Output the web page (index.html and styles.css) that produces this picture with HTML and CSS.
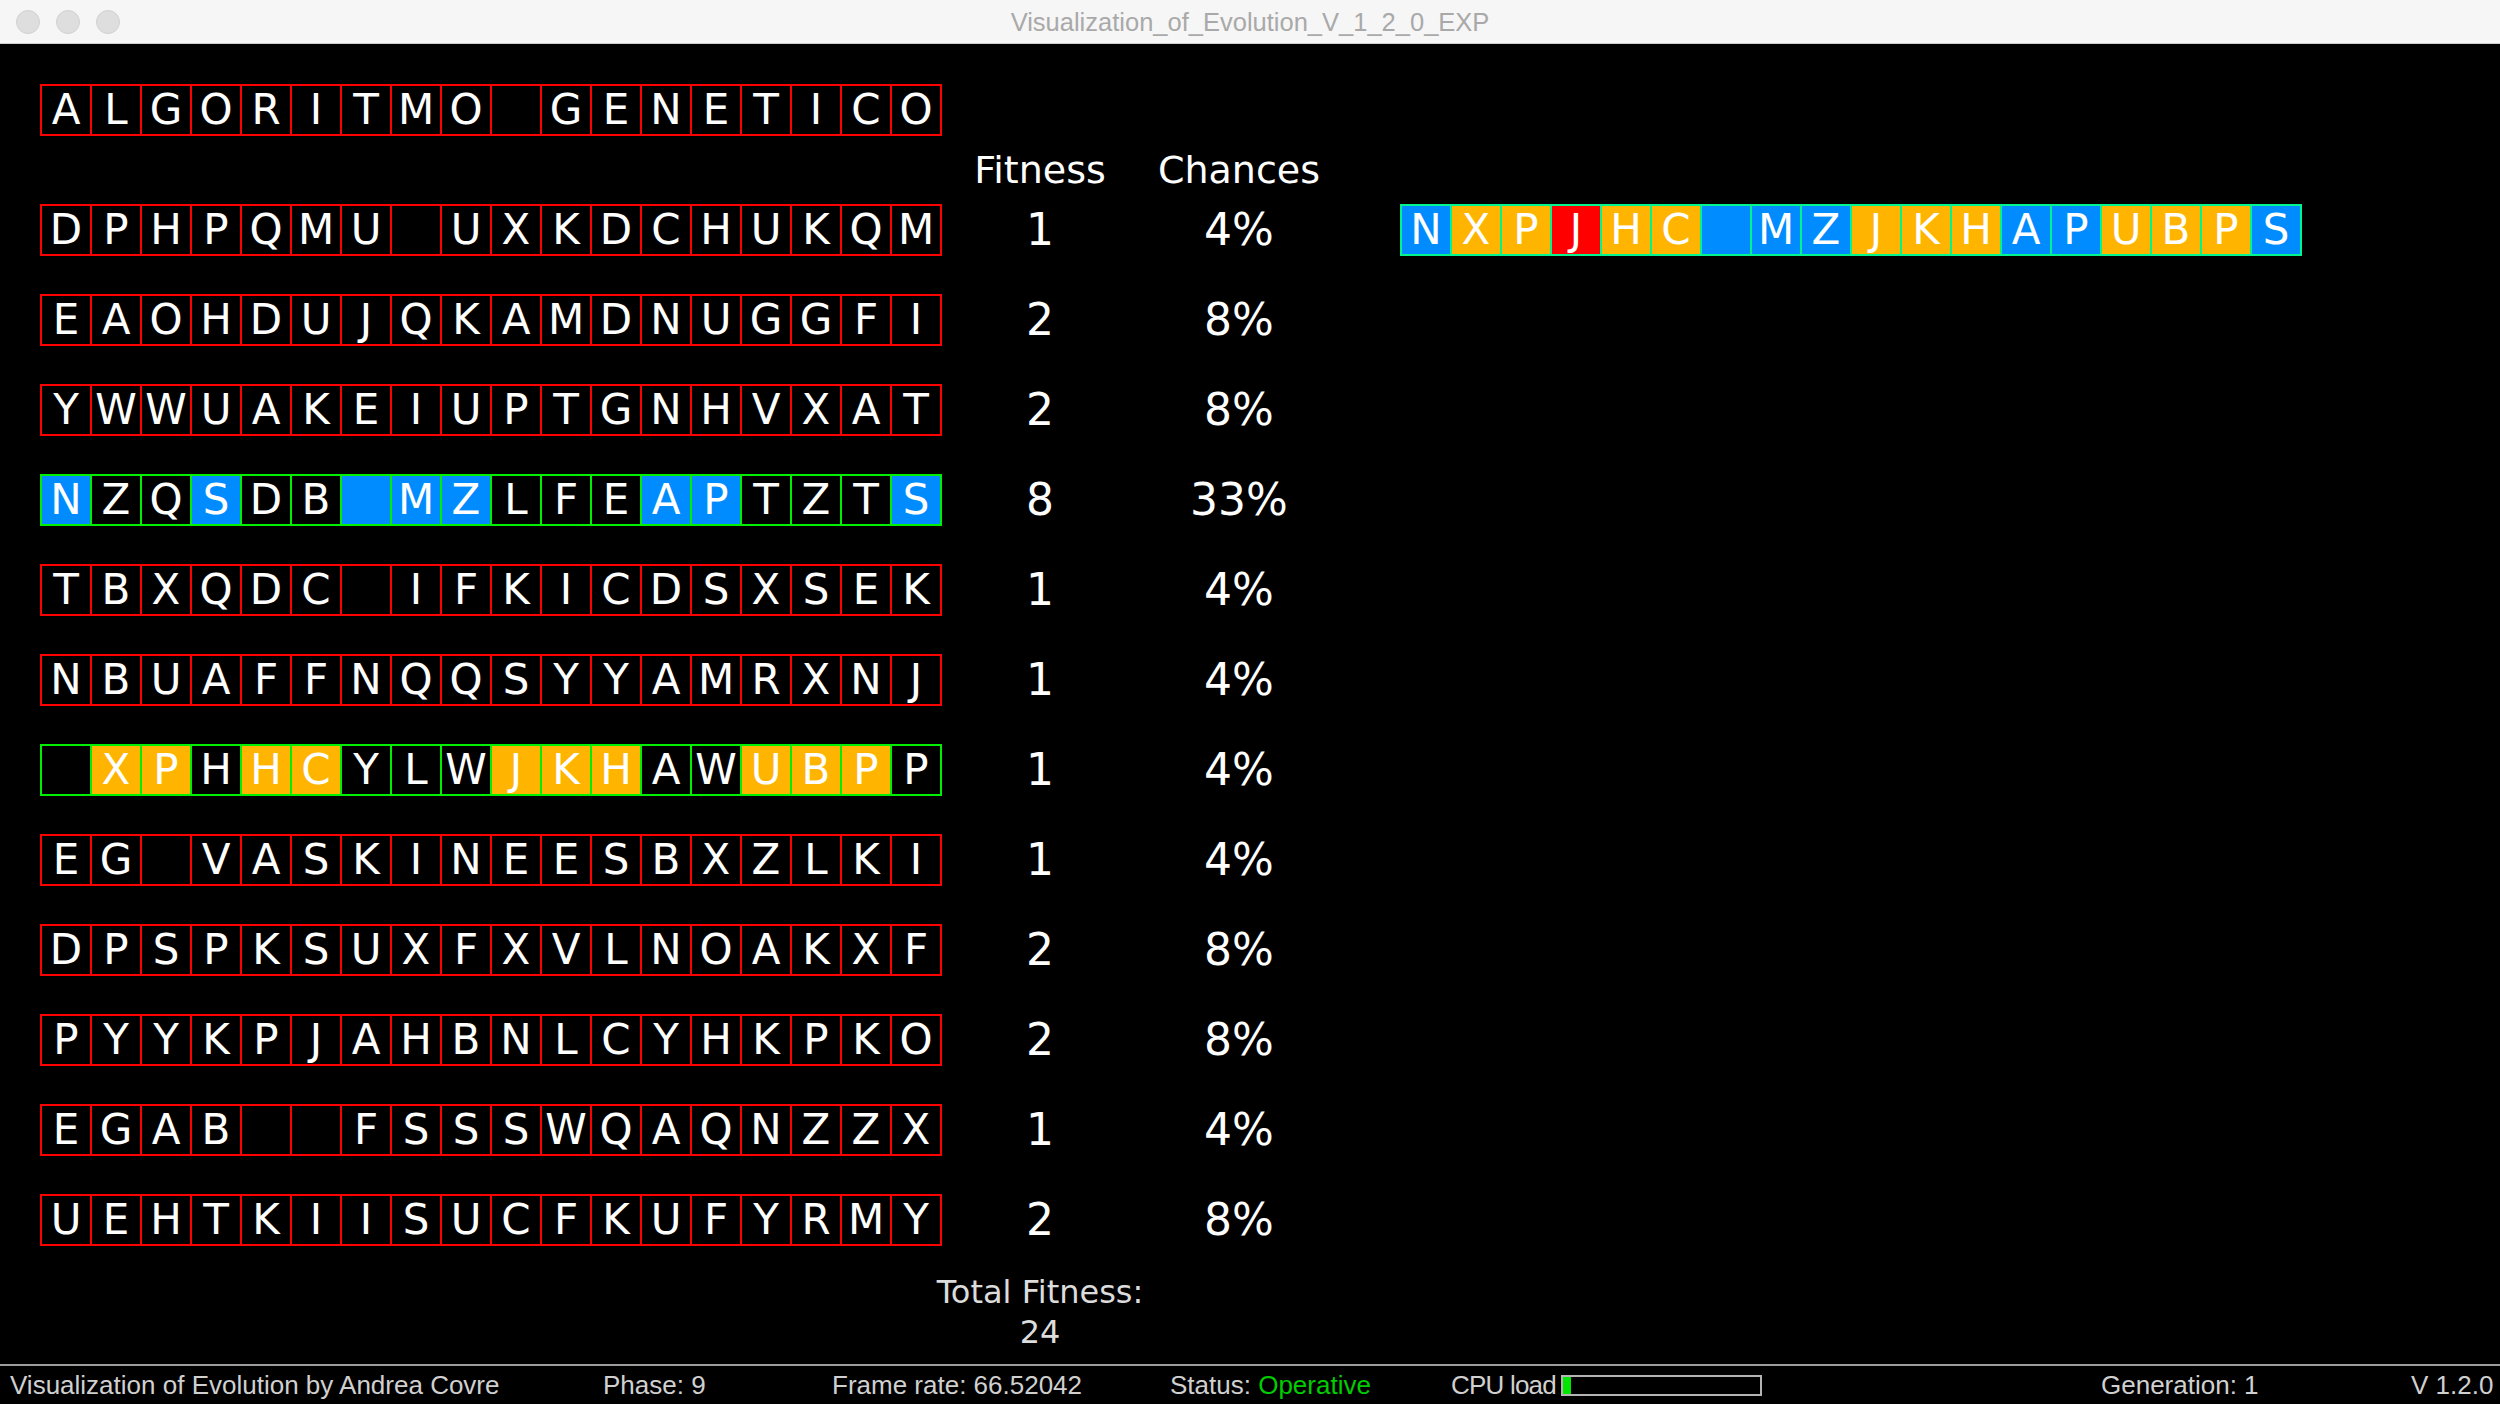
FILE: index.html
```html
<!DOCTYPE html>
<html>
<head>
<meta charset="utf-8">
<title>Visualization_of_Evolution_V_1_2_0_EXP</title>
<link rel="stylesheet" href="styles.css">
</head>
<body>
<header class="titlebar">
  <div class="lights"><span class="light"></span><span class="light"></span><span class="light"></span></div>
  <div class="wtitle">Visualization_of_Evolution_V_1_2_0_EXP</div>
  <div></div>
</header>

<main class="stage">
  <div class="gene red target">
    <span class="c">A</span><span class="c">L</span><span class="c">G</span><span class="c">O</span><span class="c">R</span><span class="c">I</span><span class="c">T</span><span class="c">M</span><span class="c">O</span><span class="c"></span><span class="c">G</span><span class="c">E</span><span class="c">N</span><span class="c">E</span><span class="c">T</span><span class="c">I</span><span class="c">C</span><span class="c">O</span>
  </div>

  <div class="head">
    <span></span><span class="hcol">Fitness</span><span class="hcol">Chances</span><span></span>
  </div>

  <div class="pop">
    <div class="gene red"><span class="c">D</span><span class="c">P</span><span class="c">H</span><span class="c">P</span><span class="c">Q</span><span class="c">M</span><span class="c">U</span><span class="c"></span><span class="c">U</span><span class="c">X</span><span class="c">K</span><span class="c">D</span><span class="c">C</span><span class="c">H</span><span class="c">U</span><span class="c">K</span><span class="c">Q</span><span class="c">M</span></div>
    <span class="num">1</span><span class="num">4%</span>
    <div class="child">
      <div class="gene mint"><span class="c b">N</span><span class="c o">X</span><span class="c o">P</span><span class="c r">J</span><span class="c o">H</span><span class="c o">C</span><span class="c b"></span><span class="c b">M</span><span class="c b">Z</span><span class="c o">J</span><span class="c o">K</span><span class="c o">H</span><span class="c b">A</span><span class="c b">P</span><span class="c o">U</span><span class="c o">B</span><span class="c o">P</span><span class="c b">S</span></div>
    </div>

    <div class="gene red"><span class="c">E</span><span class="c">A</span><span class="c">O</span><span class="c">H</span><span class="c">D</span><span class="c">U</span><span class="c">J</span><span class="c">Q</span><span class="c">K</span><span class="c">A</span><span class="c">M</span><span class="c">D</span><span class="c">N</span><span class="c">U</span><span class="c">G</span><span class="c">G</span><span class="c">F</span><span class="c">I</span></div>
    <span class="num">2</span><span class="num">8%</span><span></span>

    <div class="gene red"><span class="c">Y</span><span class="c">W</span><span class="c">W</span><span class="c">U</span><span class="c">A</span><span class="c">K</span><span class="c">E</span><span class="c">I</span><span class="c">U</span><span class="c">P</span><span class="c">T</span><span class="c">G</span><span class="c">N</span><span class="c">H</span><span class="c">V</span><span class="c">X</span><span class="c">A</span><span class="c">T</span></div>
    <span class="num">2</span><span class="num">8%</span><span></span>

    <div class="gene green"><span class="c b">N</span><span class="c">Z</span><span class="c">Q</span><span class="c b">S</span><span class="c">D</span><span class="c">B</span><span class="c b"></span><span class="c b">M</span><span class="c b">Z</span><span class="c">L</span><span class="c">F</span><span class="c">E</span><span class="c b">A</span><span class="c b">P</span><span class="c">T</span><span class="c">Z</span><span class="c">T</span><span class="c b">S</span></div>
    <span class="num">8</span><span class="num">33%</span><span></span>

    <div class="gene red"><span class="c">T</span><span class="c">B</span><span class="c">X</span><span class="c">Q</span><span class="c">D</span><span class="c">C</span><span class="c"></span><span class="c">I</span><span class="c">F</span><span class="c">K</span><span class="c">I</span><span class="c">C</span><span class="c">D</span><span class="c">S</span><span class="c">X</span><span class="c">S</span><span class="c">E</span><span class="c">K</span></div>
    <span class="num">1</span><span class="num">4%</span><span></span>

    <div class="gene red"><span class="c">N</span><span class="c">B</span><span class="c">U</span><span class="c">A</span><span class="c">F</span><span class="c">F</span><span class="c">N</span><span class="c">Q</span><span class="c">Q</span><span class="c">S</span><span class="c">Y</span><span class="c">Y</span><span class="c">A</span><span class="c">M</span><span class="c">R</span><span class="c">X</span><span class="c">N</span><span class="c">J</span></div>
    <span class="num">1</span><span class="num">4%</span><span></span>

    <div class="gene green"><span class="c"></span><span class="c o">X</span><span class="c o">P</span><span class="c">H</span><span class="c o">H</span><span class="c o">C</span><span class="c">Y</span><span class="c">L</span><span class="c">W</span><span class="c o">J</span><span class="c o">K</span><span class="c o">H</span><span class="c">A</span><span class="c">W</span><span class="c o">U</span><span class="c o">B</span><span class="c o">P</span><span class="c">P</span></div>
    <span class="num">1</span><span class="num">4%</span><span></span>

    <div class="gene red"><span class="c">E</span><span class="c">G</span><span class="c"></span><span class="c">V</span><span class="c">A</span><span class="c">S</span><span class="c">K</span><span class="c">I</span><span class="c">N</span><span class="c">E</span><span class="c">E</span><span class="c">S</span><span class="c">B</span><span class="c">X</span><span class="c">Z</span><span class="c">L</span><span class="c">K</span><span class="c">I</span></div>
    <span class="num">1</span><span class="num">4%</span><span></span>

    <div class="gene red"><span class="c">D</span><span class="c">P</span><span class="c">S</span><span class="c">P</span><span class="c">K</span><span class="c">S</span><span class="c">U</span><span class="c">X</span><span class="c">F</span><span class="c">X</span><span class="c">V</span><span class="c">L</span><span class="c">N</span><span class="c">O</span><span class="c">A</span><span class="c">K</span><span class="c">X</span><span class="c">F</span></div>
    <span class="num">2</span><span class="num">8%</span><span></span>

    <div class="gene red"><span class="c">P</span><span class="c">Y</span><span class="c">Y</span><span class="c">K</span><span class="c">P</span><span class="c">J</span><span class="c">A</span><span class="c">H</span><span class="c">B</span><span class="c">N</span><span class="c">L</span><span class="c">C</span><span class="c">Y</span><span class="c">H</span><span class="c">K</span><span class="c">P</span><span class="c">K</span><span class="c">O</span></div>
    <span class="num">2</span><span class="num">8%</span><span></span>

    <div class="gene red"><span class="c">E</span><span class="c">G</span><span class="c">A</span><span class="c">B</span><span class="c"></span><span class="c"></span><span class="c">F</span><span class="c">S</span><span class="c">S</span><span class="c">S</span><span class="c">W</span><span class="c">Q</span><span class="c">A</span><span class="c">Q</span><span class="c">N</span><span class="c">Z</span><span class="c">Z</span><span class="c">X</span></div>
    <span class="num">1</span><span class="num">4%</span><span></span>

    <div class="gene red"><span class="c">U</span><span class="c">E</span><span class="c">H</span><span class="c">T</span><span class="c">K</span><span class="c">I</span><span class="c">I</span><span class="c">S</span><span class="c">U</span><span class="c">C</span><span class="c">F</span><span class="c">K</span><span class="c">U</span><span class="c">F</span><span class="c">Y</span><span class="c">R</span><span class="c">M</span><span class="c">Y</span></div>
    <span class="num">2</span><span class="num">8%</span><span></span>
  </div>

  <div class="total">
    <span>Total Fitness:</span>
    <span>24</span>
  </div>
</main>

<footer class="status">
  <span>Visualization of Evolution by Andrea Covre</span>
  <span>Phase: 9</span>
  <span>Frame rate: 66.52042</span>
  <span>Status: <span class="ok">Operative</span></span>
  <span class="cpu"><span class="cpu-label">CPU load</span><span class="bar"><span class="fill"></span></span></span>
  <span>Generation: 1</span>
  <span class="ver">V 1.2.0</span>
</footer>
</body>
</html>
```

FILE: styles.css
```css
html, body {
  margin: 0;
  padding: 0;
}

body {
  width: 2500px;
  height: 1404px;
  background: #000;
  display: flex;
  flex-direction: column;
  overflow: hidden;
  font-family: "DejaVu Sans", sans-serif;
  color: #fff;
}

/* window title bar */
.titlebar {
  height: 43px;
  flex: none;
  background: #f6f6f6;
  border-bottom: 1px solid #cfcfcf;
  display: grid;
  grid-template-columns: 1fr auto 1fr;
  align-items: center;
}

.lights {
  display: flex;
  gap: 16px;
  padding-left: 16px;
}

.light {
  width: 22px;
  height: 22px;
  border-radius: 50%;
  background: #dedede;
  border: 1px solid #d2d2d2;
}

.wtitle {
  font-family: "Liberation Sans", sans-serif;
  font-size: 25.5px;
  color: #a9a9a9;
  padding-top: 1px;
}

/* main drawing area */
.stage {
  flex: 1;
  padding: 40px 0 0 40px;
}

.gene {
  --bc: #ff0000;
  display: flex;
  width: max-content;
  border: 2px solid var(--bc);
}

.gene.red { --bc: #ff0000; }
.gene.green { --bc: #00ee00; }
.gene.mint { --bc: #00f590; }

.c {
  width: 48px;
  height: 48px;
  display: flex;
  align-items: center;
  justify-content: center;
  font-size: 42px;
  line-height: 48px;
  color: #fff;
}

.c + .c {
  border-left: 2px solid var(--bc);
}

.c.b { background: #008cff; }
.c.o { background: #ffb400; }
.c.r { background: #ff0000; }

.head,
.pop {
  display: grid;
  grid-template-columns: 902px 196px 202px auto;
}

.head {
  height: 68px;
  align-items: center;
}

.hcol {
  text-align: center;
  font-size: 38px;
  line-height: 68px;
}

.pop {
  grid-auto-rows: 52px;
  row-gap: 38px;
  align-items: center;
}

.num {
  text-align: center;
  font-size: 44px;
  line-height: 52px;
}

.child {
  padding-left: 60px;
}

.total {
  width: 196px;
  margin-left: 902px;
  margin-top: 26px;
  display: flex;
  flex-direction: column;
  align-items: center;
  font-size: 32px;
  line-height: 40px;
  color: #dcdcdc;
  white-space: nowrap;
}

/* status bar */
.status {
  height: 38px;
  flex: none;
  border-top: 2px solid #9c9c9c;
  display: grid;
  grid-template-columns: 593px 229px 338px 281px 650px 310px auto;
  align-items: center;
  padding-left: 10px;
  font-family: "Liberation Sans", sans-serif;
  font-size: 26px;
  line-height: 38px;
  color: #d0d0d0;
  white-space: nowrap;
}

.ok {
  color: #00cc00;
}

.cpu {
  display: flex;
  align-items: center;
  gap: 6px;
}

.cpu-label {
  width: 104px;
  letter-spacing: -0.8px;
  white-space: nowrap;
}

.bar {
  width: 197px;
  height: 17px;
  border: 2px solid #b4b4b4;
  display: flex;
}

.fill {
  width: 8px;
  background: #00e600;
}
```
